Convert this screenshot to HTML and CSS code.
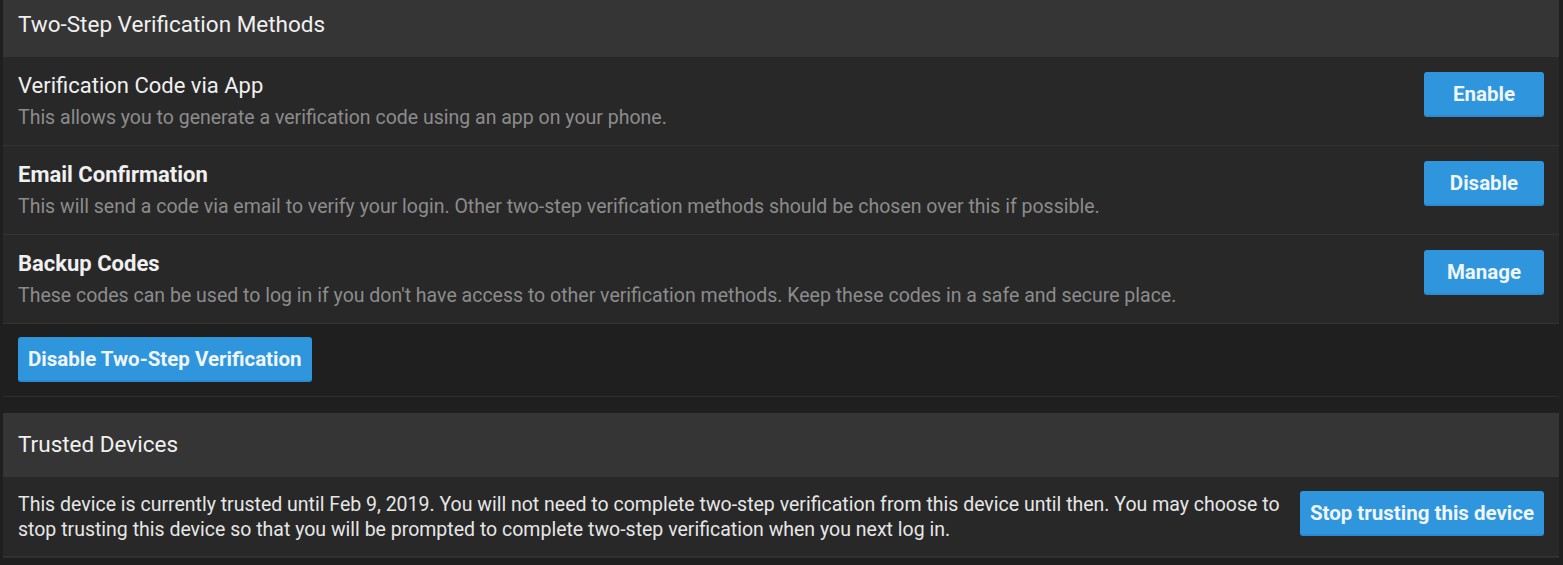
FILE: index.html
```html
<!DOCTYPE html>
<html lang="en">
<head>
<meta charset="utf-8">
<title>Two-Step Verification</title>
<link rel="stylesheet" href="styles.css">
</head>
<body>
<div class="page">
  <section class="block">
    <h2 class="block-header">Two-Step Verification Methods</h2>
    <div class="block-body">
      <div class="row">
        <div class="row-main">
          <div class="row-title">Verification Code via App</div>
          <div class="row-desc">This allows you to generate a verification code using an app on your phone.</div>
        </div>
        <button class="button button-row">Enable</button>
      </div>
      <div class="row">
        <div class="row-main">
          <div class="row-title bold">Email Confirmation</div>
          <div class="row-desc">This will send a code via email to verify your login. Other two-step verification methods should be chosen over this if possible.</div>
        </div>
        <button class="button button-row">Disable</button>
      </div>
      <div class="row">
        <div class="row-main">
          <div class="row-title bold">Backup Codes</div>
          <div class="row-desc">These codes can be used to log in if you don't have access to other verification methods. Keep these codes in a safe and secure place.</div>
        </div>
        <button class="button button-row">Manage</button>
      </div>
    </div>
    <div class="block-footer">
      <button class="button">Disable Two-Step Verification</button>
    </div>
  </section>

  <section class="block">
    <h2 class="block-header">Trusted Devices</h2>
    <div class="block-body">
      <div class="row row-trusted">
        <div class="row-text">This device is currently trusted until Feb 9, 2019. You will not need to complete two-step verification from this device until then. You may choose to stop trusting this device so that you will be prompted to complete two-step verification when you next log in.</div>
        <button class="button button-stop">Stop trusting this device</button>
      </div>
    </div>
  </section>
</div>
</body>
</html>
```

FILE: styles.css
```css
* { box-sizing: border-box; }
html, body {
  margin: 0;
  padding: 0;
  background: #1f1f1f;
}
body {
  font-family: Roboto, "Liberation Sans", Arial, sans-serif;
  color: #e8e8e8;
}
.page {
  width: 1563px;
  margin-top: -7px;
  padding: 0 4px 0 3px;
  display: flex;
  flex-direction: column;
  gap: 16px;
}
.block {
  background: #222222;
  border-bottom: 1px solid #2e2e2e;
}
.block-header {
  margin: 0;
  background: #353535;
  font-size: 22.5px;
  font-weight: 400;
  color: #f0f0f0;
  height: 64px;
  padding: 18px 15px;
  line-height: 26px;
}
.block-body {
  background: #282828;
}
.row {
  display: flex;
  align-items: flex-start;
  justify-content: space-between;
  padding: 16px 15px 14px 15px;
  border-bottom: 1px solid #333333;
  min-height: 89px;
}
.row .button-row {
  margin-top: -1px;
}
.row-title {
  font-size: 22px;
  line-height: 26px;
  color: #f0f0f0;
}
.row-title.bold { font-weight: 700; }
.row-desc {
  font-size: 19.5px;
  line-height: 26px;
  color: #8c8c8c;
  margin-top: 6px;
}
.button {
  font-family: Roboto, "Liberation Sans", Arial, sans-serif;
  font-size: 20.5px;
  font-weight: 700;
  color: #eef6fc;
  background: #2f95dc;
  border: none;
  border-bottom: 2px solid #2b8ad0;
  border-radius: 3px;
  height: 45px;
  padding: 0 10px;
  cursor: pointer;
}
.button-row {
  width: 120px;
  flex: none;
}
.block-footer {
  background: #1f1f1f;
  padding: 13px 15px 14px;
  height: 72px;
}
.row-trusted {
  min-height: 80px;
  padding: 14px 15px 14px;
  gap: 20px;
}
.row-text {
  font-size: 19.5px;
  line-height: 25px;
  color: #e6e6e6;
  margin-top: 1px;
}
.button-stop {
  flex: none;
}
```
